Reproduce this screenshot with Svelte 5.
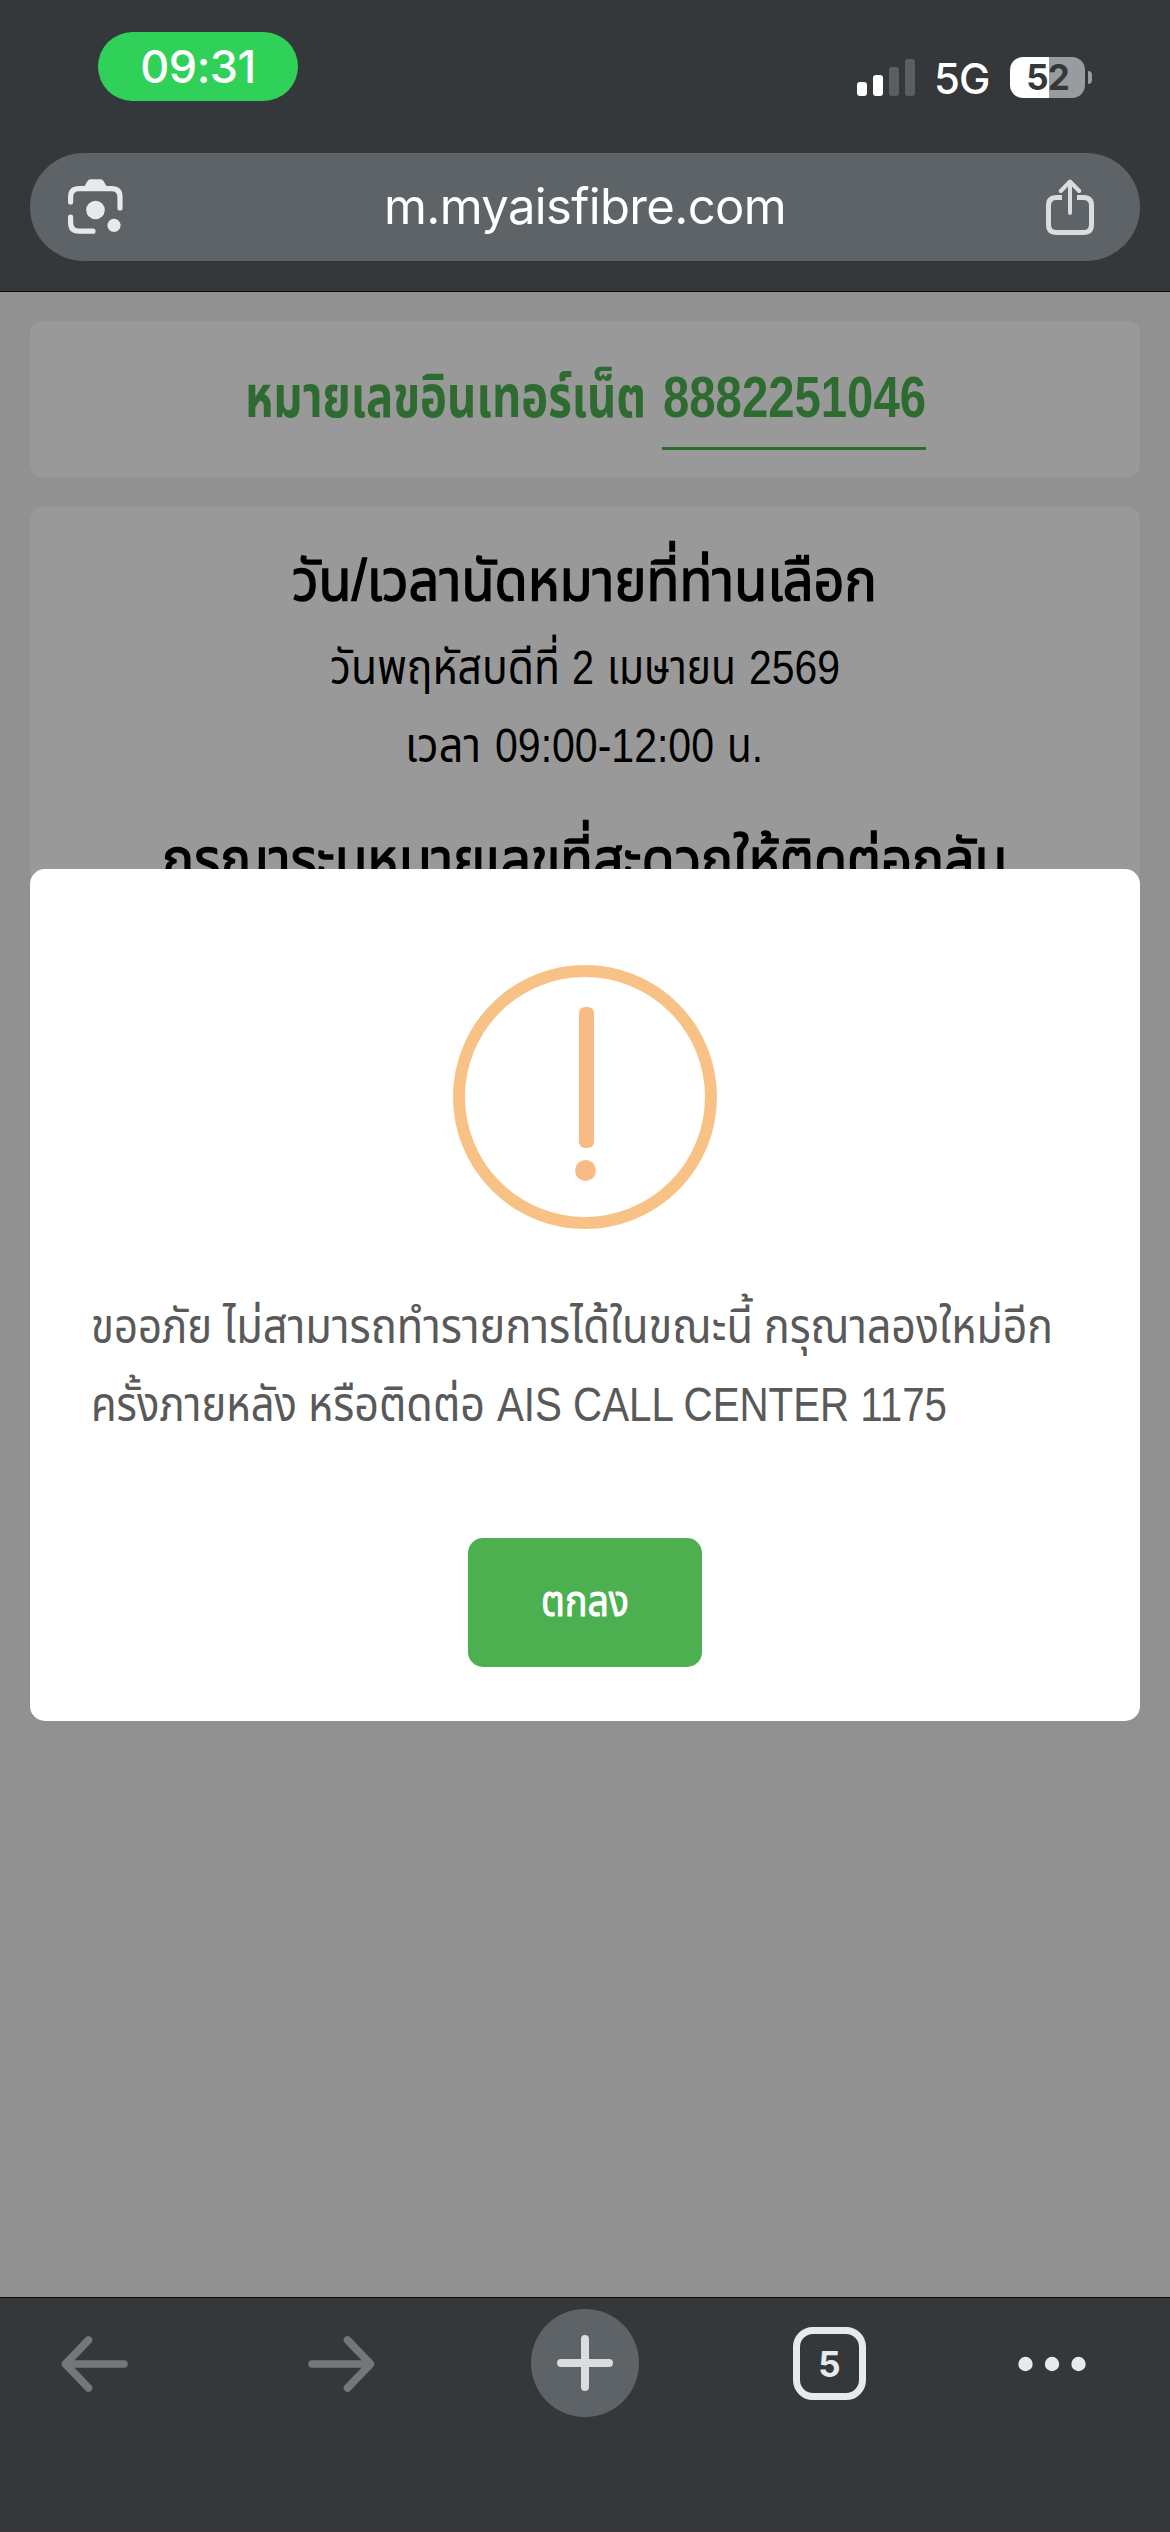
<script>
    // Condensed text: every run is fitted to its own width
    const account = [
        { x: 215, w: 401, text: 'หมายเลขอินเทอร์เน็ต' },
        { x: 633, w: 263, text: '8882251046' }
    ];
    const slotTitle = [{ x: 262, w: 585, text: 'วัน/เวลานัดหมายที่ท่านเลือก' }];
    const slotDate = [
        { x: 300, w: 230, text: 'วันพฤหัสบดีที่' },
        { x: 542, w: 22, text: '2' },
        { x: 577, w: 129, text: 'เมษายน' },
        { x: 719, w: 91, text: '2569' }
    ];
    const slotTime = [
        { x: 375, w: 76, text: 'เวลา' },
        { x: 465, w: 219, text: '09:00-12:00' },
        { x: 697, w: 36, text: 'น.' }
    ];
    const contactTitle = [{ x: 132, w: 845, text: 'กรุณาระบุหมายเลขที่สะดวกให้ติดต่อกลับ' }];
    const messageTop = [
        { x: 0, w: 121, text: 'ขออภัย' },
        { x: 132, w: 530, text: 'ไม่สามารถทำรายการได้ในขณะนี้' },
        { x: 673, w: 289, text: 'กรุณาลองใหม่อีก' }
    ];
    const messageBottom = [
        { x: 0, w: 206, text: 'ครั้งภายหลัง' },
        { x: 217, w: 177, text: 'หรือติดต่อ' },
        { x: 406, w: 450, text: 'AIS CALL CENTER 1175' }
    ];
    const okLabel = [{ x: -1, w: 88, text: 'ตกลง' }];
</script>

{#snippet line(runs, width, height, baseline, kind)}
    <svg class="line {kind}" {width} {height}>
        {#each runs as run}
            <text x={run.x} y={baseline} textLength={run.w} lengthAdjust="spacingAndGlyphs">{run.text}</text>
        {/each}
    </svg>
{/snippet}

<div class="screen">
    <header>
        <div class="status">
            <div class="clock">09:31</div>
            <div class="indicators">
                <svg width="58" height="38" viewBox="0 0 58 38">
                    <rect x="0" y="23" width="10" height="14" rx="3" fill="#fff" />
                    <rect x="16" y="16" width="10" height="21" rx="3" fill="#fff" />
                    <rect x="32" y="8" width="10" height="29" rx="3" fill="#5c5d5f" />
                    <rect x="48" y="0" width="10" height="37" rx="3" fill="#5c5d5f" />
                </svg>
                <span class="network">5G</span>
                <div class="battery"><span>52</span></div>
                <i class="battery-tip"></i>
            </div>
        </div>
        <div class="address">
            <svg width="56" height="56" viewBox="0 0 56 56" fill="none" stroke="#e6eaed" stroke-width="5.2" stroke-linecap="round">
                <path d="M2.6 23V18Q2.6 9.6 11 9.6H43.5Q52 9.6 52 18V29" />
                <path d="M2.6 38V43.5Q2.6 52.2 11 52.2H25" />
                <path d="M16 8L19.5 2Q20.5.3 22.5.3H32.5Q34.5.3 35.5 2L39 8Z" fill="#e6eaed" stroke="none" />
                <circle cx="27.5" cy="31" r="9.3" fill="#e6eaed" stroke="none" />
                <circle cx="46" cy="46.3" r="6.6" fill="#e6eaed" stroke="none" />
            </svg>
            <span class="url">m.myaisfibre.com</span>
            <svg width="48" height="57" viewBox="0 0 48 57" fill="none" stroke="#dadce0" stroke-width="5">
                <path d="M16 18.5H10.5Q2.5 18.5 2.5 26.5V45.5Q2.5 53.5 10.5 53.5H37.5Q45.5 53.5 45.5 45.5V26.5Q45.5 18.5 37.5 18.5H31" />
                <path d="M24 34V3.5M14.8 12L24 2.5L33.2 12" stroke-width="4" stroke-linecap="round" stroke-linejoin="round" />
            </svg>
        </div>
    </header>

    <main>
        <section class="card account">
            {@render line(account, 1110, 156, 96, 'green')}
            <i class="underline"></i>
        </section>
        <section class="card appointment">
            {@render line(slotTitle, 1110, 120, 93, 'title')}
            {@render line(slotDate, 1110, 78, 57, 'body')}
            {@render line(slotTime, 1110, 78, 57, 'body')}
            {@render line(contactTitle, 1110, 120, 96, 'title')}
        </section>

        <div class="modal">
            <div class="warning"><i class="bar"></i><i class="dot"></i></div>
            <div class="message">
                {@render line(messageTop, 986, 78, 57, 'grey')}
                {@render line(messageBottom, 986, 78, 57, 'grey')}
            </div>
            <button>{@render line(okLabel, 87, 60, 43, 'ok')}</button>
        </div>
    </main>

    <footer>
        <svg width="68" height="56" viewBox="0 0 68 56" class="nav-arrow">
            <path d="M63 28H5M27.5 4L4.5 28L27.5 52" />
        </svg>
        <svg width="68" height="56" viewBox="0 0 68 56" class="nav-arrow">
            <path d="M5 28H63M40.5 4L63.5 28L40.5 52" />
        </svg>
        <div class="new-tab">
            <svg width="56" height="56" viewBox="0 0 56 56" stroke="#dadce0" stroke-width="8" stroke-linecap="round">
                <path d="M4 28H52M28 4V52" />
            </svg>
        </div>
        <div class="tabs">5</div>
        <svg class="more" width="68" height="16" viewBox="0 0 68 16" fill="#e6eaed">
            <circle cx="7.5" cy="8" r="7.2" />
            <circle cx="34" cy="8" r="7.2" />
            <circle cx="60.5" cy="8" r="7.2" />
        </svg>
    </footer>
</div>

<style>
    :global(body) {
        margin: 0;
        background: #34383b;
    }

    .screen {
        width: 1170px;
        height: 2532px;
        display: flex;
        flex-direction: column;
        overflow: hidden;
        background: #34383b;
        font-family: Inter, 'Liberation Sans', sans-serif;
    }

    header {
        box-sizing: border-box;
        height: 292px;
        padding: 32px 30px 0;
        border-bottom: 1px solid #0a0b0b;
    }

    .status {
        height: 121px;
        display: flex;
        justify-content: space-between;
        align-items: flex-start;
        padding: 0 48px 0 68px;
    }

    .clock {
        width: 200px;
        height: 69px;
        line-height: 70px;
        border-radius: 35px;
        background: #30d158;
        color: #fff;
        font-size: 45px;
        font-weight: 500;
        letter-spacing: -0.5px;
        text-align: center;
    }

    .indicators {
        display: flex;
        align-items: center;
        margin-top: 25px;
        height: 41px;
    }

    .network {
        margin: 2px 0 0 19px;
        width: 76px;
        color: #fff;
        font-size: 42px;
        font-weight: 500;
        line-height: 41px;
        letter-spacing: -1px;
    }

    .battery {
        width: 75px;
        height: 41px;
        border-radius: 13px;
        background: linear-gradient(90deg, #fff 39px, #9a9b9d 39px);
        color: #34383b;
        font-size: 35px;
        font-weight: 700;
        line-height: 41px;
        text-align: center;
        letter-spacing: -1px;
    }

    .battery-tip {
        width: 4px;
        height: 13px;
        margin-left: 3px;
        border-radius: 0 5px 5px 0;
        background: #9a9b9d;
    }

    .address {
        box-sizing: border-box;
        height: 108px;
        border-radius: 54px;
        padding: 0 46px 0 38px;
        display: flex;
        align-items: center;
        justify-content: space-between;
        background: #5e6367;
    }

    .url {
        color: #fff;
        font-size: 49px;
        line-height: 60px;
        letter-spacing: -0.65px;
    }

    main {
        flex: none;
        height: 2005px;
        background: #919191;
        position: relative;
        box-sizing: border-box;
        padding: 29px 30px 0;
    }

    .card {
        border-radius: 12px;
        background: #999;
    }

    .account {
        height: 156px;
        position: relative;
        margin-bottom: 30px;
    }

    .underline {
        position: absolute;
        left: 632px;
        top: 126px;
        width: 264px;
        height: 3px;
        background: #2e6b31;
    }

    .appointment {
        height: 376px;
        overflow: hidden;
    }

    .line {
        display: block;
        overflow: visible;
        font-family: 'Liberation Sans Narrow', 'Liberation Sans', 'Noto Sans Thai', sans-serif;
        font-size: 49px;
    }

    .green {
        fill: #2e6b31;
        font-size: 58px;
        font-weight: 700;
    }

    .title {
        fill: #000;
        font-size: 58px;
        stroke: #000;
        stroke-width: 1.4px;
    }

    .body {
        fill: #000;
    }

    .grey {
        fill: #595959;
    }

    .ok {
        fill: #fff;
        font-size: 43px;
        stroke: #fff;
        stroke-width: 1px;
    }

    .modal {
        position: absolute;
        left: 30px;
        top: 577px;
        width: 1110px;
        height: 852px;
        box-sizing: border-box;
        padding: 96px 60px 0;
        display: flex;
        flex-direction: column;
        align-items: center;
        border-radius: 15px;
        background: #fff;
    }

    .warning {
        box-sizing: border-box;
        width: 264px;
        height: 264px;
        border: 12px solid #f8c286;
        border-radius: 50%;
        display: flex;
        flex-direction: column;
        align-items: center;
        padding-top: 30px;
    }

    .bar {
        width: 15px;
        height: 141px;
        margin: 0 0 12px 3px;
        border-radius: 6px;
        background: #f8bb86;
    }

    .dot {
        width: 21px;
        height: 21px;
        margin-left: 1px;
        border-radius: 50%;
        background: #f8bb86;
    }

    .message {
        width: 988px;
        margin: 57px 0 96px;
    }

    button {
        width: 234px;
        height: 129px;
        padding: 0;
        border: 0;
        border-radius: 15px;
        background: #4caf50;
        display: flex;
        align-items: center;
        justify-content: center;
    }

    footer {
        flex: 1;
        box-sizing: border-box;
        border-top: 1px solid #0a0b0b;
        border-bottom: 1px solid #3f3639;
        padding: 11px 0 0 61px;
        display: grid;
        grid-template-columns: 246px 224px 262px 225px 68px;
        align-items: start;
    }

    .nav-arrow {
        margin-top: 27px;
        fill: none;
        stroke: #757679;
        stroke-width: 7.6;
        stroke-linecap: round;
        stroke-linejoin: round;
    }

    .new-tab {
        width: 108px;
        height: 108px;
        border-radius: 50%;
        display: flex;
        align-items: center;
        justify-content: center;
        background: #5e6367;
    }

    .tabs {
        box-sizing: border-box;
        width: 73px;
        height: 73px;
        margin-top: 18px;
        border: 7px solid #e6eaed;
        border-radius: 20px;
        color: #e6eaed;
        font-size: 35px;
        font-weight: 700;
        line-height: 61px;
        text-align: center;
    }

    .more {
        margin-top: 47px;
    }
</style>
